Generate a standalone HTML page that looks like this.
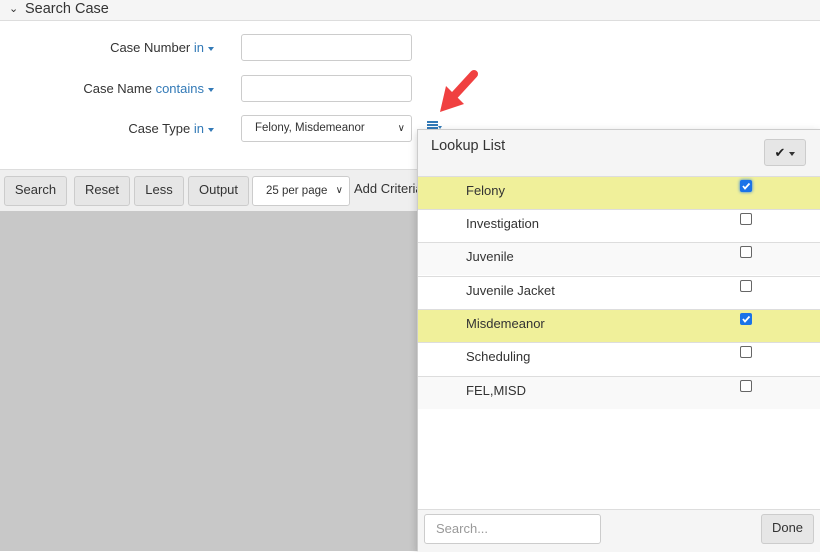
<!DOCTYPE html>
<html><head><style>
*{box-sizing:border-box}
body{margin:0;width:820px;height:551px;overflow:hidden;font-family:"Liberation Sans",Arial,sans-serif;font-size:13px;color:#333;background:#fff;position:relative}
.hdr{position:absolute;left:0;top:0;width:820px;height:21px;background:#f5f5f5;border-bottom:1px solid #ddd;font-size:14.5px;line-height:18px}
.lbl{position:absolute;right:606px;font-size:13px;text-align:right;white-space:nowrap}
.lbl span{color:#337ab7}
.car{display:inline-block;width:0;height:0;border-left:3.5px solid transparent;border-right:3.5px solid transparent;border-top:4px solid #337ab7;vertical-align:middle;margin-left:4px}
.inp{position:absolute;left:241px;width:171px;height:27px;border:1px solid #ccc;border-radius:3px;background:#fff}
.tb{position:absolute;left:0;top:169px;width:820px;height:42px;background:#efefef;border-top:1px solid #ddd}
.btn{position:absolute;top:6px;height:30px;border:1px solid #ccc;border-radius:3px;background:#e6e6e6;font-size:13px;line-height:26px;text-align:center}
.gray{position:absolute;left:0;top:211px;width:820px;height:340px;background:#c8c8c8}
.pop{position:absolute;left:417px;top:129px;width:403px;height:422px;background:#fff;border:1px solid #ccc;border-right:none;box-shadow:0 3px 8px rgba(0,0,0,.2)}
.row{position:absolute;left:0;width:402px;height:33px;border-top:1px solid #ddd;line-height:28px;padding-left:48px}
.cb{position:absolute;left:322px;top:3px;width:12px;height:12px;border:1px solid #666;border-radius:2px;background:#fff}
.cb.on{background:#1a73e8;border-color:#1a73e8}
.cb.on svg{position:absolute;left:0;top:0}
</style></head><body>
<div class="hdr"><span style="position:absolute;left:9px;top:0;font-size:11px">&#x2304;</span><span style="position:absolute;left:25px">Search Case</span></div>
<div class="lbl" style="top:40px">Case Number <span>in</span><i class="car"></i></div>
<div class="lbl" style="top:81px">Case Name <span>contains</span><i class="car"></i></div>
<div class="lbl" style="top:121px">Case Type <span>in</span><i class="car"></i></div>
<div class="inp" style="top:34px"></div>
<div class="inp" style="top:75px"></div>
<div class="inp" style="top:115px;font-size:11.5px;line-height:25px;padding-left:13px">Felony, Misdemeanor<span style="position:absolute;right:6px;top:0;font-size:10px">&#x2228;</span></div>
<div style="position:absolute;left:427px;top:121px;width:11px;height:2px;background:#337ab7;box-shadow:0 3px 0 #337ab7,0 6px 0 #337ab7"></div>
<div style="position:absolute;left:438px;top:126px;border-left:2.5px solid transparent;border-right:2.5px solid transparent;border-top:3px solid #337ab7"></div>
<svg style="position:absolute;left:436px;top:68px" width="46" height="50"><path d="M38 6 L16 30" stroke="#f04040" stroke-width="8" stroke-linecap="round"/><path d="M4 44 L10 18 L28 36 Z" fill="#f04040"/></svg>
<div class="tb">
<div class="btn" style="left:4px;width:63px">Search</div>
<div class="btn" style="left:74px;width:56px">Reset</div>
<div class="btn" style="left:134px;width:50px">Less</div>
<div class="btn" style="left:188px;width:61px">Output</div>
<div class="btn" style="left:252px;width:98px;background:#fff;font-size:11.5px;text-align:left;padding-left:13px;line-height:28px">25 per page<span style="position:absolute;right:6px;font-size:10px">&#x2228;</span></div>
<div style="position:absolute;left:354px;top:6px;line-height:26px">Add Criteria</div>
</div>
<div class="gray"></div>
<div class="pop">
<div style="position:absolute;left:0;top:0;width:402px;height:46px;background:#f5f5f5"></div>
<div style="position:absolute;left:13px;top:8px;font-size:14.5px">Lookup List</div>
<div style="position:absolute;left:346px;top:9px;width:42px;height:27px;border:1px solid #ccc;border-radius:3px;background:#e6e6e6;text-align:center;line-height:25px;font-size:13px;color:#222">&#x2714;<i class="car" style="border-top-color:#333"></i></div>
<div class="row" style="top:46px;background:#f0f09a">Felony<i class="cb on" style="box-shadow:0 0 3px #1a73e8"><svg width="10" height="10"><path d="M2 5 L4 7.5 L8.5 2.5" stroke="#fff" stroke-width="1.8" fill="none"/></svg></i></div>
<div class="row" style="top:79px">Investigation<i class="cb"></i></div>
<div class="row" style="top:112px;background:#f9f9f9">Juvenile<i class="cb"></i></div>
<div class="row" style="top:146px">Juvenile Jacket<i class="cb"></i></div>
<div class="row" style="top:179px;background:#f0f09a">Misdemeanor<i class="cb on"><svg width="10" height="10"><path d="M2 5 L4 7.5 L8.5 2.5" stroke="#fff" stroke-width="1.8" fill="none"/></svg></i></div>
<div class="row" style="top:212px">Scheduling<i class="cb"></i></div>
<div class="row" style="top:246px;background:#f9f9f9;height:33px">FEL,MISD<i class="cb"></i></div>
<div style="position:absolute;left:0;top:379px;width:402px;height:43px;background:#f5f5f5;border-top:1px solid #ddd"></div>
<div style="position:absolute;left:6px;top:384px;width:177px;height:30px;border:1px solid #ccc;border-radius:3px;background:#fff;color:#999;padding-left:11px;line-height:28px">Search...</div>
<div style="position:absolute;left:343px;top:384px;width:53px;height:30px;border:1px solid #ccc;border-radius:3px;background:#e6e6e6;text-align:center;line-height:26px">Done</div>
</div>
</body></html>
